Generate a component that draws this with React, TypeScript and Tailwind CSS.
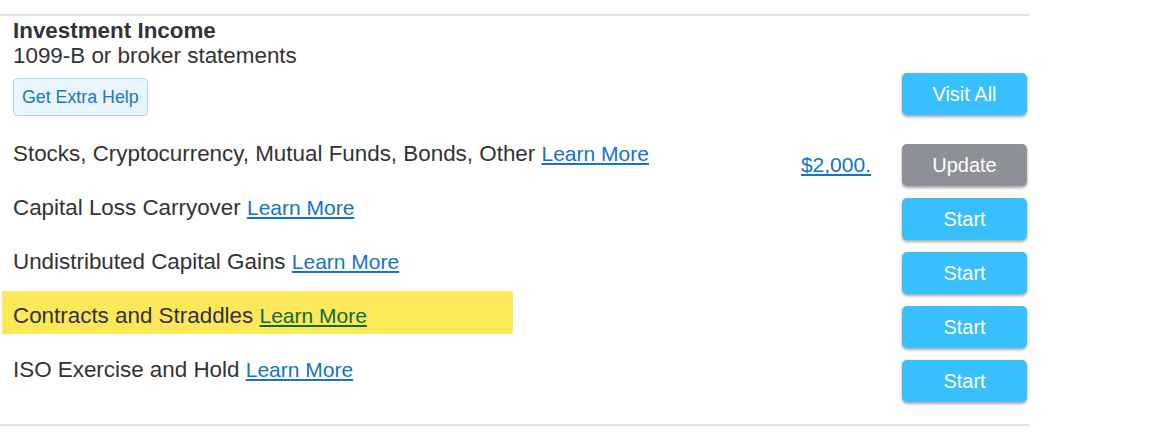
import React from 'react'

type Row = { label: string; amount?: string; action: 'Start' | 'Update'; highlight?: boolean }

const ROWS: Row[] = [
  { label: 'Stocks, Cryptocurrency, Mutual Funds, Bonds, Other', amount: '$2,000.', action: 'Update' },
  { label: 'Capital Loss Carryover', action: 'Start' },
  { label: 'Undistributed Capital Gains', action: 'Start' },
  { label: 'Contracts and Straddles', action: 'Start', highlight: true },
  { label: 'ISO Exercise and Hold', action: 'Start' },
]

function ActionButton({ label, gray }: { label: string; gray?: boolean }) {
  return (
    <button
      className={`w-[125px] h-[42px] rounded-[5px] text-white text-[20px] shadow-[0_2px_3px_rgba(0,0,0,0.35)] ${
        gray ? 'bg-[#8d9096]' : 'bg-[#37c0fd]'
      }`}
    >
      {label}
    </button>
  )
}

export default function App() {
  return (
    <div className="bg-white w-[1171px] h-[432px] pt-[14px] font-['Liberation_Sans',Arial,sans-serif] text-[#333]">
      <div className="w-[1029px] border-t-2 border-b-2 border-[#e3e3e3] h-[412px]">
        <div className="flex justify-between items-end pl-[13px] pr-[2px]">
          <div>
            <h2 className="text-[22.4px] leading-[24px] font-bold mt-[3px]">Investment Income</h2>
            <p className="text-[22.4px] leading-[26px]">1099-B or broker statements</p>
            <button className="mt-[9px] h-[38px] px-[8px] rounded-[4px] border border-[#b6d7eb] bg-[#e9f5fd] text-[#1679c2] text-[17.8px]">
              Get Extra Help
            </button>
          </div>
          <div className="mb-[1px]">
            <ActionButton label="Visit All" />
          </div>
        </div>

        <div className="mt-[13px]">
          {ROWS.map((row) => (
            <div key={row.label} className="flex items-start h-[54px] pl-[2px] pr-[2px]">
              <div
                className={`w-[511px] h-[43px] pl-[11px] pt-[6px] flex items-center whitespace-nowrap text-[22.4px] ${
                  row.highlight ? 'bg-[#fde85a]' : ''
                }`}
              >
                {row.label}&nbsp;
                <a href="#" className={`underline text-[21px] ${row.highlight ? 'text-[#0e6b3b]' : 'text-[#1673c7]'}`}>
                  Learn More
                </a>
              </div>
              <div className="flex-1 flex items-center justify-end mt-[15px] h-[42px] pr-[31px]">
                {row.amount && (
                  <a href="#" className="underline text-[#1673c7] text-[21px]">
                    {row.amount}
                  </a>
                )}
              </div>
              <div className="mt-[15px]">
                <ActionButton label={row.action} gray={row.action === 'Update'} />
              </div>
            </div>
          ))}
        </div>
      </div>
    </div>
  )
}
